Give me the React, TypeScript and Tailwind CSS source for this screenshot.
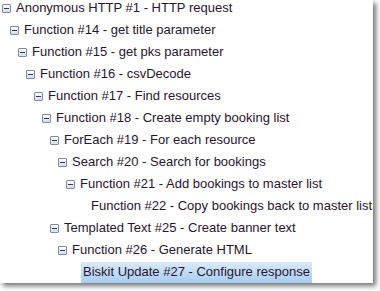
import React from "react";

type Node = { label: string; level: number; leaf?: boolean; selected?: boolean };

const rows: Node[] = [
  { label: "Anonymous HTTP #1 - HTTP request", level: 0 },
  { label: "Function #14 - get title parameter", level: 1 },
  { label: "Function #15 - get pks parameter", level: 2 },
  { label: "Function #16 - csvDecode", level: 3 },
  { label: "Function #17 - Find resources", level: 4 },
  { label: "Function #18 - Create empty booking list", level: 5 },
  { label: "ForEach #19 - For each resource", level: 6 },
  { label: "Search #20 - Search for bookings", level: 7 },
  { label: "Function #21 - Add bookings to master list", level: 8 },
  { label: "Function #22 - Copy bookings back to master list", level: 9, leaf: true },
  { label: "Templated Text #25 - Create banner text", level: 6 },
  { label: "Function #26 - Generate HTML", level: 7 },
  { label: "Biskit Update #27 - Configure response", level: 8, leaf: true, selected: true },
];

const Minus = () => (
  <span className="flex h-[9px] w-[9px] shrink-0 items-center justify-center rounded-[1px] border border-[#7f8ca8] bg-gradient-to-b from-white to-[#d7dce6]">
    <span className="h-px w-[5px] bg-[#2b3a5a]" />
  </span>
);

const TreeRow = ({ node }: { node: Node }) => (
  <div
    className="flex h-[22px] items-center whitespace-nowrap"
    style={{ paddingLeft: node.level * 8 + 2 }}
  >
    {node.leaf ? (
      <span className="w-[17px] shrink-0" />
    ) : (
      <>
        <Minus />
        <span className="w-[5px] shrink-0" />
      </>
    )}
    <span
      className={
        node.selected
          ? "-ml-[2px] flex h-[21px] items-center bg-gradient-to-b from-[#dbeafa] to-[#a6cdf1] pl-[2px] pr-[2px]"
          : ""
      }
    >
      {node.label}
    </span>
  </div>
);

export default function App() {
  return (
    <div className="h-[291px] w-[380px] overflow-hidden bg-white">
      <div className="h-[283px] w-[373px] overflow-hidden bg-white font-['Liberation_Sans',Arial,sans-serif] text-[13px] text-[#2a1430] shadow-[3px_3px_5px_rgba(0,0,0,0.55)]">
        <div className="-mt-[3px]">
          {rows.map((r) => (
            <TreeRow key={r.label} node={r} />
          ))}
        </div>
      </div>
    </div>
  );
}
